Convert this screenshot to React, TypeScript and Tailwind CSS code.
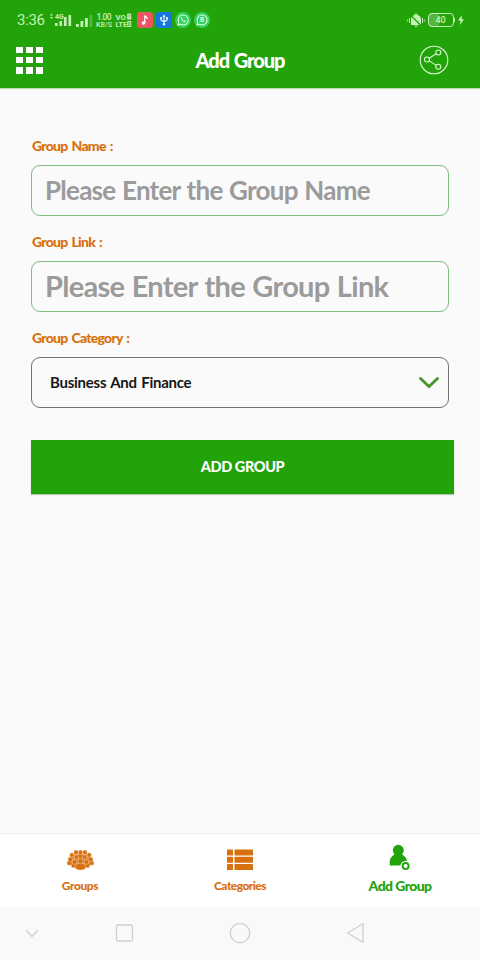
const signalBars = [3, 6, 9, 12]

function Signal({ className, dim }: { className: string, dim?: boolean }) {
    return (
        <svg className={className} viewBox="0 0 17 12" fill="#c5f0b8">
            {signalBars.map((h, i) => (
                <rect key={h} x={i * 4.5} y={12 - h} width="2.8" height={h} opacity={dim && i === 3 ? 0.3 : 1} />
            ))}
        </svg>
    )
}

function StatusBar() {
    return (
        <div className="flex h-10 items-center pl-[17px] pr-4 font-['Roboto',sans-serif] text-[#c5f0b8]">
            <span className="w-[32px] text-[15px] leading-none tracking-[-0.3px]">3:36</span>
            <svg className="h-4 w-[25px]" viewBox="0 0 25 16" fill="#c5f0b8">
                <path d="M1 3.5l1.5-2 1.5 2zM1 5l1.5 2L4 5z" />
                <text x="6" y="7" fontSize="7" fontWeight="700">4G</text>
                <rect x="6" y="11" width="2.6" height="3" />
                <rect x="10.5" y="9" width="2.6" height="5" />
                <rect x="15" y="5" width="2.6" height="9" />
                <rect x="19.5" y="3" width="2.6" height="11" />
            </svg>
            <Signal className="ml-[2px] mt-0.5 h-[12px] w-[17px]" dim />
            <svg className="ml-[2px] h-4 w-[18px]" viewBox="0 0 18 16" fill="#c5f0b8">
                <text x="1.5" y="7.8" fontSize="8.5" fontWeight="500" textLength="15">1.00</text>
                <text x="1" y="14.8" fontSize="7" fontWeight="500" textLength="16">KB/S</text>
            </svg>
            <svg className="ml-[2px] h-4 w-[18px]" viewBox="0 0 18 16" fill="#c5f0b8">
                <text x="0.5" y="7.5" fontSize="8" fontWeight="700" textLength="10.5" lengthAdjust="spacingAndGlyphs">VO</text>
                <text x="0.5" y="15" fontSize="8" fontWeight="700" textLength="11.5" lengthAdjust="spacingAndGlyphs">LTE</text>
                <rect x="12.2" y="1.5" width="4" height="6" rx="0.6" />
                <rect x="12.2" y="9" width="4" height="6" rx="0.6" />
                <path d="M13.4 3h1.6l-1 3M13.4 10.5h1.6v3h-1.6z" fill="none" stroke="#21a309" strokeWidth="0.6" />
            </svg>
            <svg className="ml-[4px] h-4 w-4" viewBox="0 0 16 16">
                <rect width="16" height="16" rx="3" fill="#ed5565" />
                <path d="M7.8 11V3.5c.6 1.6 2.6 1.4 2.6 3.6" fill="none" stroke="#fff" strokeWidth="1.3" />
                <circle cx="6.5" cy="11" r="1.8" fill="#fff" />
            </svg>
            <svg className="ml-[3px] h-4 w-4" viewBox="0 0 16 16">
                <rect width="16" height="16" rx="3" fill="#1677e0" />
                <path d="M8 4v8M5 6v2.2l3 1.6 3-1.6V6" fill="none" stroke="#fff" strokeWidth="1.1" />
                <path d="M8 2.5l1.5 2.2h-3z" fill="#fff" />
                <circle cx="8" cy="12.2" r="1.2" fill="#fff" />
                <circle cx="5" cy="6" r="1" fill="#fff" />
                <rect x="10.1" y="5.1" width="1.8" height="1.8" fill="#fff" />
            </svg>
            <svg className="ml-[3px] h-4 w-4" viewBox="0 0 16 16">
                <circle cx="8" cy="8" r="8" fill="#35cf5c" />
                <path d="M3 13l.8-2.6A5 5 0 1 1 5.7 12.3z" fill="none" stroke="#e4ffe5" strokeWidth="1.1" />
                <path d="M6.1 5.5c-.5 2 2 4.7 4.2 4.7l.4-1.2-1.4-.7-.6.6-1.6-1.7.5-.6-.6-1.3z" fill="#e4ffe5" />
            </svg>
            <svg className="ml-[3px] h-4 w-4" viewBox="0 0 16 16">
                <circle cx="8" cy="8" r="8" fill="#35cf5c" />
                <path d="M3 13l.8-2.6A5 5 0 1 1 5.7 12.3z" fill="none" stroke="#e4ffe5" strokeWidth="1.1" />
                <text x="6" y="10.4" fontSize="6.5" fontWeight="700" fill="#e4ffe5">B</text>
            </svg>
            <svg className="ml-auto h-[15px] w-[18px]" viewBox="0 0 18 15" fill="#c5f0b8">
                <path d="M4 12V6.5C4 4 5.5 2.5 7.5 2a1.5 1.5 0 0 1 3 0C12.5 2.5 14 4 14 6.5V12zM7 12.6h4L9 14.2z" />
                <path d="M2.5 5v5M.7 6.5v2M15.5 5v5M17.3 6.5v2" stroke="#c5f0b8" strokeWidth="0.9" />
                <path d="M3.5 2l11 11" stroke="#21a309" strokeWidth="1.2" />
            </svg>
            <div className="ml-[3px] flex h-[14px] w-[26px] items-center justify-center rounded-[4px] border border-[#c5f0b8] bg-linear-to-r from-[#53b63f] from-40% to-[#21a309] to-40% text-[9px] font-medium leading-none">
                40
            </div>
            <div className="h-1 w-[1.5px] bg-[#c5f0b8]" />
            <svg className="ml-[3px] h-[10px] w-[6px]" viewBox="0 0 6 10" fill="#c5f0b8">
                <path d="M4 0L0 5.6h2.5L2 10l4-5.8H3.5z" />
            </svg>
        </div>
    )
}

function Header() {
    return (
        <div className="grid h-12 grid-cols-[1fr_auto_1fr] items-start pl-4 pr-[31px]">
            <div className="mt-[6.5px] grid w-[27px] grid-cols-3 gap-[3.5px]">
                {Array.from({ length: 9 }, (_, i) => (
                    <div key={i} className="h-[6.7px] w-[6.7px] bg-white" />
                ))}
            </div>
            <h1 className="ml-[15px] mt-[7px] text-[20px] font-black leading-[26px] tracking-[-1.05px] text-white [word-spacing:1px]">Add Group</h1>
            <svg className="ml-auto mt-[5px] h-[30px] w-[30px]" viewBox="0 0 30 30" fill="none" stroke="#d9f7cf" strokeWidth="1.1">
                <circle cx="15" cy="15" r="13.8" />
                <circle cx="8" cy="14.5" r="2.5" />
                <circle cx="19.3" cy="7.5" r="2.5" />
                <circle cx="19.3" cy="21.8" r="2.5" />
                <path d="M10.2 13.2l7-4.4M10.2 15.9l7 4.5" />
            </svg>
        </div>
    )
}

function Label({ text, className = '' }: { text: string, className?: string }) {
    return <label className={`block h-5 pl-px text-[14px] font-black leading-5 tracking-[-0.75px] text-[#d9700f] [word-spacing:1.5px] ${className}`}>{text}</label>
}

function GroupsIcon() {
    return (
        <svg className="h-[22px] w-[27px]" viewBox="0 0 27 22" fill="#d9700f" stroke="#fff" strokeWidth="0.35">
            {[[9, 3.4], [18, 3.4], [13.5, 3.2], [4.8, 6], [22.2, 6], [9.3, 8], [17.7, 8]].map(([x, y]) => (
                <g key={`${x}-${y}`}>
                    <rect x={x - 3} y={y + 1.5} width="6" height="8" rx="1.5" />
                    <circle cx={x} cy={y} r="2.3" />
                </g>
            ))}
            {[[3.3, 11.5], [23.7, 11.5], [7.5, 14], [19.5, 14]].map(([x, y]) => (
                <g key={`${x}-${y}`}>
                    <rect x={x - 3.2} y={y} width="6.4" height="4.8" rx="1.5" />
                    <circle cx={x} cy={y - 1} r="2.4" />
                </g>
            ))}
            <path d="M8.5 19.5c0-4 2-5.5 5-5.5s5 1.5 5 5.5c-2.5 2-7.500 2-10 0z" />
            <circle cx="13.5" cy="12" r="2.6" />
        </svg>
    )
}

function CategoriesIcon() {
    return (
        <svg className="h-[22px] w-[26px]" viewBox="0 0 26 22" fill="#d9700f">
            {[0.5, 7.7, 14.9].map((y) => (
                <g key={y}>
                    <rect y={y} width="6" height="6" rx="0.5" />
                    <rect x="7.5" y={y} width="18.5" height="6" rx="0.5" />
                </g>
            ))}
        </svg>
    )
}

function AddGroupIcon() {
    return (
        <svg className="h-[27px] w-[22px]" viewBox="0 0 22 27" fill="#21a309">
            <circle cx="9.3" cy="6.3" r="5.5" />
            <path d="M.7 21.5v-3c0-4.500 2.500-6.500 5.300-8.500h6.600c2.800 2 5.400 4 5.400 8.500v3z" />
            <circle cx="16.6" cy="22" r="5.200" fill="#fff" />
            <circle cx="16.6" cy="22" r="3" fill="none" stroke="#21a309" strokeWidth="1.9" />
        </svg>
    )
}

export default function App() {
    return (
        <div className="flex h-[960px] w-[480px] flex-col bg-[#fafafa] font-['Lato',sans-serif]">
            <header className="h-[88px] bg-[#21a309] shadow-[0_1px_1px_#b8dfb0]">
                <StatusBar />
                <Header />
            </header>

            <main className="flex-1 pl-[31px] pt-12">
                <Label text="Group Name :" />
                <input
                    className="mt-[9px] block h-[51px] w-[418px] rounded-[9px] border border-[#7fbd7c] pb-px pl-[13px] text-[26px] font-bold tracking-[-0.75px] [word-spacing:1px] placeholder:text-[#9b9b9b]"
                    placeholder="Please Enter the Group Name"
                />
                <Label text="Group Link :" className="mt-4" />
                <input
                    className="mt-[9px] block h-[51px] w-[418px] rounded-[9px] border border-[#7fbd7c] pb-[3px] pl-[13px] text-[29px] font-bold tracking-[-0.7px] [word-spacing:1px] placeholder:text-[#9b9b9b]"
                    placeholder="Please Enter the Group Link"
                />
                <Label text="Group Category :" className="mt-4" />
                <div className="mt-[9px] flex h-[51px] w-[418px] items-center justify-between rounded-[9px] border border-[#727272] pl-[18px] pr-[9px]">
                    <span className="text-[15px] font-bold tracking-[-0.25px] text-[#161616] [word-spacing:1px]">Business And Finance</span>
                    <svg className="h-3 w-5" viewBox="0 0 20 12" fill="none" stroke="#43972a" strokeWidth="2.8">
                        <path d="M1.5 1.5l8.500 8 8.500-8" strokeLinecap="round" />
                    </svg>
                </div>
                <button className="mt-8 block h-[54px] w-[423px] bg-[#21a309] pb-px text-[14.5px] font-black tracking-[-0.4px] text-white shadow-[0_1px_1px_#b4c8b0]">
                    ADD GROUP
                </button>
            </main>

            <nav className="grid h-[74px] grid-cols-3 border-t border-[#eeeeee] bg-white">
                <div className="flex flex-col items-center pt-[15px]">
                    <GroupsIcon />
                    <span className="mt-[7px] text-[12px] font-black leading-4 tracking-[-0.4px] text-[#d9700f]">Groups</span>
                </div>
                <div className="flex flex-col items-center pt-[15px]">
                    <CategoriesIcon />
                    <span className="mt-[7px] text-[12px] font-black leading-4 tracking-[-0.55px] text-[#d9700f]">Categories</span>
                </div>
                <div className="flex flex-col items-center pt-[10px]">
                    <AddGroupIcon />
                    <span className="mt-[7px] text-[14px] font-black leading-4 tracking-[-0.6px] text-[#21a309]">Add Group</span>
                </div>
            </nav>

            <footer className="h-[53px] bg-[#f9f9f9]">
                <svg className="h-[53px] w-[480px]" viewBox="0 0 480 53" fill="none" stroke="#cfcfcf" strokeWidth="1.3">
                    <path d="M26 23l6 6.5 6-6.5" />
                    <rect x="116.5" y="18" width="16" height="16" rx="1.5" />
                    <circle cx="240" cy="26" r="9.7" />
                    <path d="M347.5 26l15.500-9.300v18.600z" strokeLinejoin="round" />
                </svg>
            </footer>
        </div>
    )
}
